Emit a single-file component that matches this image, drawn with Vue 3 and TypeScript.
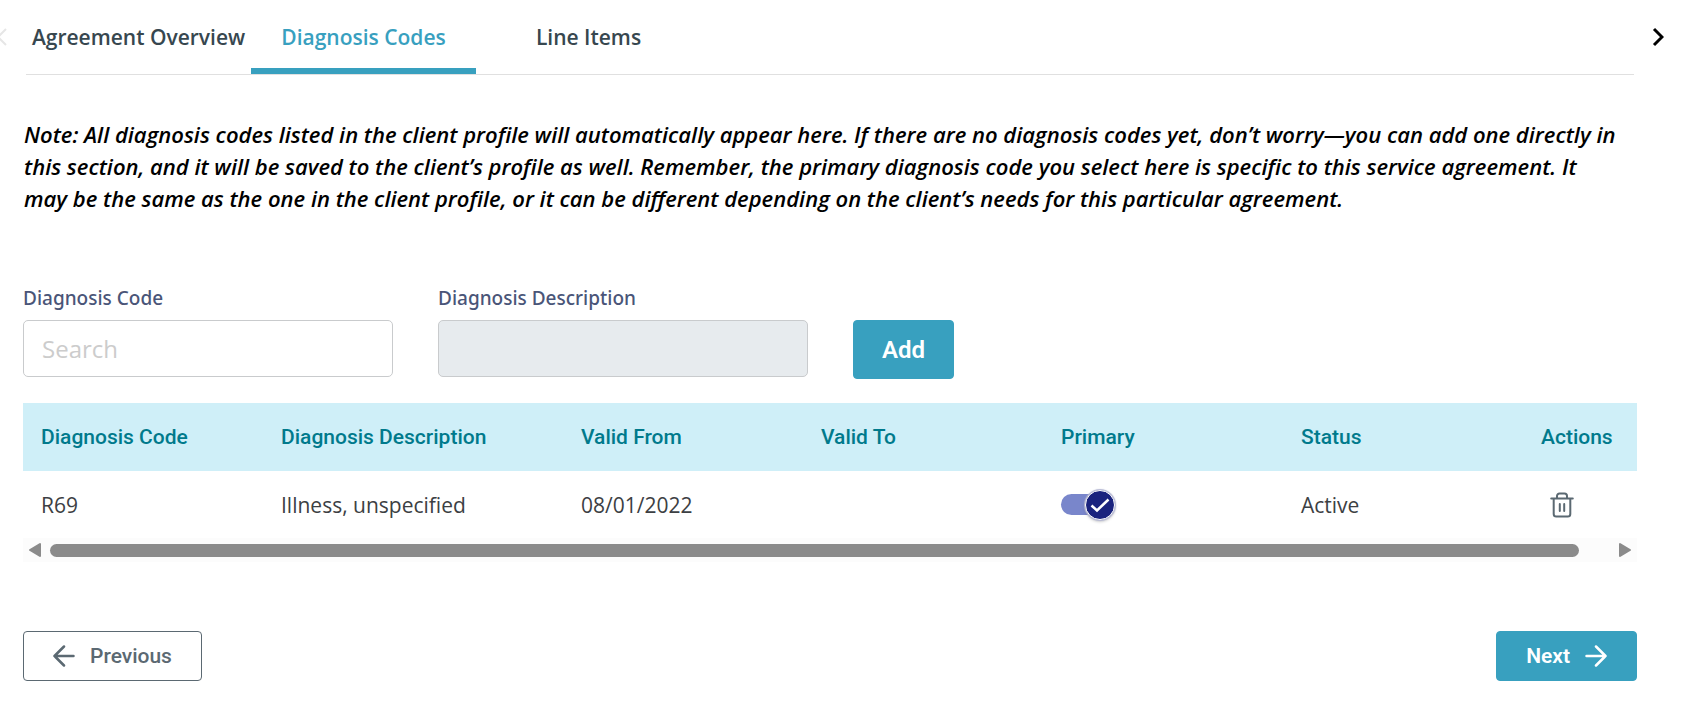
<script setup lang="ts">
import { ref } from 'vue'

interface Diagnosis {
  code: string
  description: string
  validFrom: string
  validTo: string
  primary: boolean
  status: string
}

const tabs = ['Agreement Overview', 'Diagnosis Codes', 'Line Items']
const activeTab = ref('Diagnosis Codes')

const columns = [
  'Diagnosis Code',
  'Diagnosis Description',
  'Valid From',
  'Valid To',
  'Primary',
  'Status',
  'Actions',
]

const rows = ref<Diagnosis[]>([
  {
    code: 'R69',
    description: 'Illness, unspecified',
    validFrom: '08/01/2022',
    validTo: '',
    primary: true,
    status: 'Active',
  },
])

const search = ref('')
const description = ref('')

function removeRow(index: number) {
  rows.value.splice(index, 1)
}
</script>

<template>
  <main class="page">
    <nav class="tab-bar">
      <button class="pager pager-left" type="button" aria-label="Previous tabs" disabled>
        <svg width="12" height="20" viewBox="0 0 12 20"><path d="M10 2 2 10l8 8" /></svg>
      </button>
      <div class="tabs" role="tablist">
        <button
          v-for="tab in tabs"
          :key="tab"
          type="button"
          role="tab"
          class="tab"
          :class="{ active: tab === activeTab }"
          :aria-selected="tab === activeTab"
          @click="activeTab = tab"
        >
          {{ tab }}
        </button>
      </div>
      <button class="pager pager-right" type="button" aria-label="Next tabs">
        <svg width="12" height="20" viewBox="0 0 12 20"><path d="M2 2l8 8-8 8" /></svg>
      </button>
    </nav>

    <section class="content">
      <p class="note">
        Note: All diagnosis codes listed in the client profile will automatically appear here. If
        there are no diagnosis codes yet, don’t worry—you can add one directly in this section, and
        it will be saved to the client’s profile as well. Remember, the primary diagnosis code you
        select here is specific to this service agreement. It may be the same as the one in the
        client profile, or it can be different depending on the client’s needs for this particular
        agreement.
      </p>

      <form class="add-form" @submit.prevent>
        <div class="field">
          <label for="code">Diagnosis Code</label>
          <input id="code" v-model="search" type="text" placeholder="Search" />
        </div>
        <div class="field">
          <label for="description">Diagnosis Description</label>
          <input id="description" v-model="description" type="text" disabled />
        </div>
        <button class="btn btn-fill btn-add" type="submit">Add</button>
      </form>

      <div class="table-wrap">
        <table>
          <colgroup>
            <col class="col-std" />
            <col class="col-wide" />
            <col class="col-std" />
            <col class="col-std" />
            <col class="col-std" />
            <col class="col-std" />
            <col />
          </colgroup>
          <thead>
            <tr>
              <th v-for="column in columns" :key="column" scope="col">{{ column }}</th>
            </tr>
          </thead>
          <tbody>
            <tr v-for="(row, index) in rows" :key="row.code">
              <td>{{ row.code }}</td>
              <td>{{ row.description }}</td>
              <td>{{ row.validFrom }}</td>
              <td>{{ row.validTo }}</td>
              <td>
                <label class="switch">
                  <input v-model="row.primary" type="checkbox" aria-label="Primary" />
                  <span class="thumb">
                    <svg width="20" height="16" viewBox="0 0 20 16"><path d="M1.500 8.500l5.500 5L18.500 2.500" /></svg>
                  </span>
                </label>
              </td>
              <td>{{ row.status }}</td>
              <td>
                <button class="trash" type="button" aria-label="Delete" @click="removeRow(index)">
                  <svg width="24" height="26" viewBox="0 0 24 26">
                    <path d="M1.200 6.500h21.600M3.700 6.500v15.500a2.500 2.500 0 0 0 2.500 2.500h11.600a2.500 2.500 0 0 0 2.500-2.500V6.500M7 6V4a2.500 2.500 0 0 1 2.500-2.500h5A2.500 2.500 0 0 1 17 4v2M9.800 12v7M14.200 12v7" />
                  </svg>
                </button>
              </td>
            </tr>
          </tbody>
        </table>
        <div class="scrollbar" aria-hidden="true">
          <svg width="12" height="16" viewBox="0 0 12 16"><path d="M11 2v12L1 8z" /></svg>
          <div class="track"><div class="bar"></div></div>
          <svg width="12" height="16" viewBox="0 0 12 16"><path d="M1 2v12l10-6z" /></svg>
        </div>
      </div>

      <footer class="actions">
        <button class="btn btn-outline" type="button">
          <svg width="22" height="22" viewBox="0 0 22 22"><path d="M20.500 11h-19M11 1.500 1.500 11l9.500 9.500" /></svg>
          Previous
        </button>
        <button class="btn btn-fill" type="button">
          Next
          <svg width="22" height="22" viewBox="0 0 22 22"><path d="M1.500 11h19M11 1.500 20.500 11 11 20.500" /></svg>
        </button>
      </footer>
    </section>
  </main>
</template>

<style>
body {
  margin: 0;
  background: #fff;
}
</style>

<style scoped>
.page {
  font-family: 'Open Sans', 'Noto Sans', sans-serif;
  color: #37474f;
}

button {
  font: inherit;
  cursor: pointer;
}

svg {
  display: block;
  flex: none;
  fill: none;
  stroke: currentColor;
}

.tab-bar {
  display: flex;
  height: 75px;
}

.pager {
  display: flex;
  align-items: center;
  padding: 0 0 2px;
  border: 0;
  background: none;
  color: #000;
  stroke-width: 3;
}

.pager-left {
  justify-content: flex-start;
  width: 26px;
  margin-left: -4px;
  margin-right: 4px;
  color: #e6e6e6;
  stroke-width: 2;
}

.pager-right {
  justify-content: center;
  width: 48px;
  margin-right: 6px;
}

.tabs {
  display: flex;
  flex: 1;
  border-bottom: 1px solid #e0e0e0;
}

.tab {
  width: 225px;
  padding: 6px 0 0;
  border: 0;
  border-bottom: 6px solid transparent;
  background: none;
  color: #37474f;
  font-size: 21px;
  font-weight: 600;
  white-space: nowrap;
}

.tab.active {
  border-bottom-color: #38a0bf;
  color: #38a0bf;
}

.content {
  padding: 43px 51px 0 23px;
}

.note {
  margin: 0 0 70px;
  padding: 0 16px 0 1px;
  color: #000;
  font-size: 22px;
  font-style: italic;
  font-weight: 600;
  line-height: 32px;
}

.add-form {
  display: flex;
  align-items: flex-end;
  gap: 45px;
}

.field {
  display: flex;
  flex-direction: column;
  gap: 8px;
  width: 370px;
  margin-bottom: 2px;
}

.field label {
  color: #4a5578;
  font-family: 'Noto Sans', 'Open Sans', sans-serif;
  font-size: 19px;
  font-weight: 500;
  line-height: 28px;
}

.field input {
  box-sizing: border-box;
  height: 57px;
  padding: 0 18px;
  border: 1px solid #c9cbcd;
  border-radius: 5px;
  background: #fff;
  color: #37474f;
  font: 24px 'Open Sans', 'Noto Sans', sans-serif;
}

.field input::placeholder {
  color: #ccc;
}

.field input:disabled {
  background: #e7ebee;
}

.btn {
  display: flex;
  align-items: center;
  gap: 15px;
  height: 50px;
  padding: 0 29px;
  border: 1px solid #38a0bf;
  border-radius: 4px;
  font-family: Roboto, sans-serif;
  font-size: 21px;
  font-weight: 600;
  stroke-width: 2.5;
  stroke-linecap: round;
  stroke-linejoin: round;
}

.btn-fill {
  background: #38a0bf;
  color: #fff;
}

.btn-outline {
  border-color: #5b6972;
  background: #fff;
  color: #5b6972;
  font-weight: 500;
}

.btn-add {
  height: 59px;
  padding: 0 28px;
  font-size: 24px;
}

.table-wrap {
  margin-top: 24px;
}

table {
  width: 100%;
  border-collapse: collapse;
  table-layout: fixed;
}

.col-std {
  width: 240px;
}

.col-wide {
  width: 300px;
}

th,
td {
  padding: 0 0 0 18px;
  text-align: left;
  white-space: nowrap;
}

th {
  height: 68px;
  background: #cfeff8;
  color: #007a8c;
  font-family: Roboto, sans-serif;
  font-size: 21px;
  font-weight: 500;
}

td {
  height: 67px;
  color: #3c4043;
  font-size: 21px;
}

.switch {
  display: flex;
  align-items: center;
  position: relative;
  width: 54px;
  height: 30px;
  cursor: pointer;
}

.switch input {
  appearance: none;
  width: 50px;
  height: 21px;
  margin: 0;
  border-radius: 11px;
  background: #bdbdbd;
}

.switch input:checked {
  background: #7986cb;
}

.thumb {
  display: flex;
  align-items: center;
  justify-content: center;
  position: absolute;
  left: 0;
  box-sizing: border-box;
  width: 30px;
  height: 30px;
  border: 1px solid #fff;
  border-radius: 50%;
  background: #1a237e;
  box-shadow: 0 0 1px 1px #b4b7d2, 0 2px 3px #0003;
  color: #fff;
  stroke-width: 2.5;
}

.switch input:checked + .thumb {
  left: 24px;
}

.trash {
  display: block;
  padding: 0 0 0 9px;
  border: 0;
  background: none;
  color: #5b6972;
  stroke-width: 2;
  stroke-linecap: round;
  stroke-linejoin: round;
}

.scrollbar {
  display: flex;
  align-items: center;
  gap: 9px;
  height: 24px;
  padding: 0 6px;
  background: #fcfcfc;
  color: #8b8b8b;
}

.scrollbar svg {
  fill: currentColor;
  stroke-width: 2;
  stroke-linejoin: round;
}

.track {
  flex: 1;
}

.bar {
  width: 98%;
  height: 13px;
  border-radius: 7px;
  background: #8b8b8b;
}

.actions {
  display: flex;
  justify-content: space-between;
  margin-top: 69px;
}
</style>
